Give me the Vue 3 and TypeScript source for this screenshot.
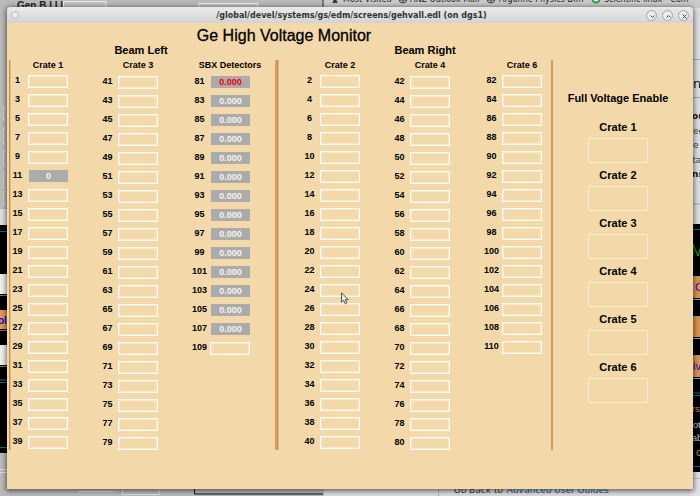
<script setup lang="ts">
interface Channel {
  id: number
  value?: string
  alarm?: boolean
}

interface Crate {
  name: string
  lowered: boolean
  channels: Channel[]
}

interface Beam {
  side: string
  crates: Crate[]
}

function channels(first: number, count: number): Channel[] {
  return Array.from({ length: count }, (_, i) => ({ id: first + i * 2 }))
}

const crate1 = channels(1, 20).map((c) => (c.id === 11 ? { ...c, value: '0' } : c))
const sbx = channels(81, 15).map((c) =>
  c.id < 109 ? { ...c, value: '0.000', alarm: c.id === 81 } : c
)

const beams: Beam[] = [
  {
    side: 'left',
    crates: [
      { name: 'Crate 1', lowered: false, channels: crate1 },
      { name: 'Crate 3', lowered: true, channels: channels(41, 20) },
      { name: 'SBX Detectors', lowered: true, channels: sbx }
    ]
  },
  {
    side: 'right',
    crates: [
      { name: 'Crate 2', lowered: false, channels: channels(2, 20) },
      { name: 'Crate 4', lowered: true, channels: channels(42, 20) },
      { name: 'Crate 6', lowered: false, channels: channels(82, 15) }
    ]
  }
]

const enables: number[] = [1, 2, 3, 4, 5, 6]
</script>

<template>
  <div class="desktop">
    <svg class="backdrop" viewBox="0 0 700 496" preserveAspectRatio="xMidYMid slice" aria-hidden="true">
      <rect width="700" height="496" fill="#b9b9b9" />
      <!-- top edge -->
      <text x="17" y="9" font-size="10" font-weight="bold" fill="#222">Gen B.I.I.I</text>
      <rect y="7" width="200" height="2" x="8" fill="#a8a8a8" />
      <path d="M63.500 8V1.500H106V8M198.500 8V3.500H258V8" fill="#c4c4c4" stroke="#eee" />
      <rect x="323" width="377" height="8" fill="#c9c9c9" />
      <rect x="322" width="2" height="8" fill="#777" />
      <g font-size="8" fill="#222" font-family="'DejaVu Sans', sans-serif">
        <text x="343" y="2">Most Visited</text>
        <text x="410" y="2">ANZ Outlook Mail</text>
        <text x="499" y="2">Argonne Physics Dim</text>
        <text x="604" y="2">Scientific linux - Com</text>
      </g>
      <path d="M333 3l2-4 2 4M335 0v3" stroke="#333" stroke-width="1.500" fill="none" />
      <g fill="none" stroke="#444">
        <circle cx="403" cy="-1" r="4" /><path d="M399 0h8M403-4v7" />
        <circle cx="491" cy="-1" r="4" /><path d="M487 0h8M491-4v7" />
      </g>
      <circle cx="596" cy="-1" r="3.500" fill="#fff" stroke="#1e9a4a" stroke-width="2" />
      <!-- left edge -->
      <path d="M6 107H3.500V120H6M6 128H3.500V144H6M6 150H3.500V166H6M6 172H3.500V188H6M6 191H3.500V205H6" fill="none" stroke="#d6d6d6" />
      <rect y="209" width="8" height="16" fill="#dedede" />
      <rect y="225" width="8" height="228" fill="#000" />
      <path d="M0 231.500H8M0 380H8M0 382.500H8M0 447.500H8" stroke="#087373" />
      <rect y="274" width="8" height="20" fill="#eee" />
      <rect y="310" width="8" height="19" fill="#e2984f" />
      <rect y="345" width="8" height="20" fill="#eee" />
      <path d="M0 295.500H8M0 330.500H8M0 366.500H8" stroke="#777" />
      <text x="-2" y="324" font-size="10" font-weight="bold" fill="#1600d8">ol</text>
      <path d="M0 469.500H8M0 472.500H8" stroke="#ddd" />
      <!-- bottom edge -->
      <path d="M78 491.500H115M122.500 488V494.500H159V488" fill="none" stroke="#ddd" />
      <path d="M194.500 488V494H323" fill="none" stroke="#111" />
      <rect x="324" y="486" width="376" height="10" fill="#dadada" />
      <path d="M438.500 486V496" stroke="#9cb6cc" />
      <g font-size="9" font-family="'DejaVu Sans', sans-serif" font-style="italic">
        <text x="454" y="493" fill="#333">Go Back to</text>
        <text x="507" y="493" fill="#204a90">Advanced User Guides</text>
      </g>
      <!-- right edge -->
      <rect x="690" y="8" width="10" height="216" fill="#dcdcdc" />
      <path d="M690 59.500H700M690 97.500H700M690 204H700" stroke="#9aa9b5" />
      <g font-family="'DejaVu Sans', sans-serif" font-size="9" fill="#444">
        <text x="693" y="88" font-size="13" fill="#111">n</text>
        <text x="692" y="119" font-weight="bold" fill="#111">or</text>
        <text x="693" y="134">ee</text>
        <text x="693" y="148">e</text>
        <text x="692" y="163">ta</text>
        <text x="692" y="177" font-weight="bold" fill="#111">ns</text>
      </g>
      <rect x="690" y="224" width="10" height="248" fill="#000" />
      <path d="M690 229.500H700M690 393H700M690 395.500H700M690 466.500H700" stroke="#087373" />
      <path d="M693 256V244L698 256L702 243" fill="none" stroke="#00c400" />
      <g fill="#d8924c">
        <rect x="690" y="277" width="10" height="21" />
        <rect x="690" y="317" width="10" height="20" />
        <rect x="690" y="356" width="10" height="21" />
      </g>
      <path d="M690 276.500H700M690 299.500H700M690 316.500H700M690 338.500H700M690 355.500H700M690 378.500H700" stroke="#999" />
      <g font-size="11" fill="#1600d8">
        <text x="695" y="291">C</text>
        <text x="693" y="370">iv</text>
      </g>
      <g font-size="9" fill="#ccc">
        <text x="692" y="412" fill="#d8924c">rs</text>
        <text x="693" y="428">ot</text>
        <text x="692" y="441">ab</text>
        <text x="696" y="456" fill="#d8924c">C</text>
      </g>
      <rect x="690" y="472" width="10" height="24" fill="#e2e2e2" />
      <path d="M690 478.500H700" stroke="#bbb" />
    </svg>

    <main class="window">
      <header class="titlebar">
        <button class="menu-dot" type="button" aria-label="Window menu"></button>
        <span class="caption">/global/devel/systems/gs/edm/screens/gehvall.edl (on dgs1)</span>
        <span class="controls">
          <button type="button" aria-label="Minimize">
            <svg viewBox="0 0 11 11"><path d="M3.500 4.500L5.500 6.500L7.500 4.500" /></svg>
          </button>
          <button type="button" aria-label="Maximize">
            <svg viewBox="0 0 11 11"><path d="M3.500 6.500L5.500 4.500L7.500 6.500" /></svg>
          </button>
          <button type="button" aria-label="Close">
            <svg viewBox="0 0 11 11"><path d="M3.500 3.500L7.500 7.500M7.500 3.500L3.500 7.500" /></svg>
          </button>
        </span>
      </header>

      <div class="screen">
        <h1>Ge High Voltage Monitor</h1>
        <h2 class="beam-name left">Beam Left</h2>
        <h2 class="beam-name right">Beam Right</h2>

        <section v-for="beam in beams" :key="beam.side" class="beam" :class="beam.side">
          <div v-for="crate in beam.crates" :key="crate.name" class="crate" :class="{ lowered: crate.lowered }">
            <h3>{{ crate.name }}</h3>
            <div v-for="ch in crate.channels" :key="ch.id" class="channel">
              <label :for="`ch-${ch.id}`">{{ ch.id }}</label>
              <output :id="`ch-${ch.id}`" :class="{ live: ch.value, alarm: ch.alarm }">{{ ch.value }}</output>
            </div>
          </div>
        </section>

        <section class="enable">
          <h2>Full Voltage Enable</h2>
          <div v-for="n in enables" :key="n" class="enable-item">
            <label :for="`enable-${n}`">Crate {{ n }}</label>
            <output :id="`enable-${n}`"></output>
          </div>
        </section>
      </div>
    </main>

    <svg class="pointer" viewBox="0 0 8 13" aria-hidden="true">
      <path d="M0.500 0.800V10L2.700 8.200L4.200 11.800L5.900 11L4.400 7.600H7.200Z" fill="#eee" stroke="#444" stroke-width="0.900" />
    </svg>
  </div>
</template>

<style>
body {
  margin: 0;
}
</style>

<style scoped>
.desktop {
  position: relative;
  display: flex;
  box-sizing: border-box;
  min-height: 100vh;
  padding: 7px;
  overflow: hidden;
  color: #000;
  font-family: "Liberation Sans", Arial, sans-serif;
}

.backdrop {
  position: absolute;
  inset: 0;
  width: 100%;
  height: 100%;
}

.window {
  position: relative;
  display: flex;
  flex: 1;
  flex-direction: column;
  border-radius: 4px 4px 0 0;
  background: #f3d9a9;
  box-shadow: 0 1px 5px 1px rgba(0, 0, 0, 0.55);
}

.titlebar {
  display: grid;
  grid-template-columns: 1fr auto 1fr;
  align-items: center;
  height: 16px;
  padding: 0 4px;
  border-radius: 4px 4px 0 0;
  background: linear-gradient(#eaeaea, #d3d3d3);
}

.caption {
  padding: 2px 0 0 3px;
  color: #333;
  font: bold 8px/14px "DejaVu Sans", sans-serif;
}

.titlebar button {
  box-sizing: border-box;
  padding: 0;
  border: 1px solid #a4a4a4;
  border-radius: 50%;
  background: #ececec;
}

.titlebar .menu-dot {
  width: 8px;
  height: 8px;
  border-color: #bcbcbc;
}

.controls {
  display: flex;
  justify-content: flex-end;
  gap: 5px;
}

.controls button {
  display: grid;
  width: 11px;
  height: 11px;
  place-items: center;
}

.controls svg {
  width: 11px;
  height: 11px;
  fill: none;
  stroke: #444;
}

.screen {
  display: grid;
  flex: 1;
  grid-template-columns: 266fr 278fr 140fr;
  grid-template-rows: 20px 17px auto;
  align-content: start;
  padding: 0 0 0 2px;
}

h1,
h2,
h3 {
  margin: 0;
  text-align: center;
  white-space: nowrap;
}

h1 {
  grid-column: 1 / 3;
  padding-left: 6px;
  font-size: 16px;
  font-weight: 400;
  line-height: 26px;
  -webkit-text-stroke: 0.3px #000;
}

h2 {
  font-size: 11px;
  line-height: 14px;
}

.beam-name {
  grid-row: 2;
}

.beam-name.left {
  padding-right: 2px;
}

.beam-name.right {
  padding-left: 22px;
}

.beam {
  display: grid;
  grid-row: 3;
  align-items: start;
}

.beam.left {
  grid-template-columns: 90fr 92fr 83fr;
  border-left: 1px solid #c48a52;
  box-shadow: inset 1px 0 #e6bd88;
}

.beam.right {
  grid-template-columns: 90fr 92fr 67fr;
  padding-left: 26px;
  border-right: 2px solid #cf9c66;
  border-left: 1px solid #cf9c66;
  box-shadow: inset 1px 0 #d9a570, inset 2px 0 #c48a52, inset 3px 0 #e3b884;
}

.crate {
  display: grid;
  width: 58px;
  gap: 6px;
}

.crate h3 {
  margin: 0 0 -2px;
  justify-self: end;
  display: flex;
  width: 40px;
  justify-content: center;
  font-size: 9px;
  line-height: 11px;
}

.crate.lowered h3 {
  margin-bottom: -1px;
}

.channel {
  display: flex;
  height: 13px;
  gap: 3px;
}

.channel label {
  display: flex;
  width: 15px;
  justify-content: center;
  font-size: 9px;
  font-weight: 700;
  line-height: 10px;
}

.channel output {
  box-sizing: border-box;
  width: 40px;
  border: 1px solid #fffdf6;
  box-shadow: inset 0 0 0 1px rgba(255, 255, 255, 0.35);
  font-size: 9px;
  font-weight: 700;
  line-height: 12px;
  text-align: center;
}

.channel output.live {
  border-color: transparent;
  border-width: 0 0 1px 1px;
  background: #ababab;
  background-clip: padding-box;
  box-shadow: none;
  color: #f4f4f4;
}

.channel output.alarm {
  color: #f00000;
}

.enable {
  display: flex;
  grid-row: 3;
  flex-direction: column;
  align-items: center;
  gap: 5px;
  padding: 31px 10px 0 0;
}

.enable h2 {
  margin-bottom: 10px;
}

.enable-item {
  display: grid;
  gap: 4px;
  justify-items: center;
}

.enable-item label {
  font-size: 11px;
  font-weight: 700;
  line-height: 14px;
}

.enable-item output {
  box-sizing: border-box;
  width: 60px;
  height: 25px;
  border: 1px solid #faecca;
}

.pointer {
  position: absolute;
  top: 292px;
  left: 341px;
  width: 8px;
  height: 13px;
}
</style>
